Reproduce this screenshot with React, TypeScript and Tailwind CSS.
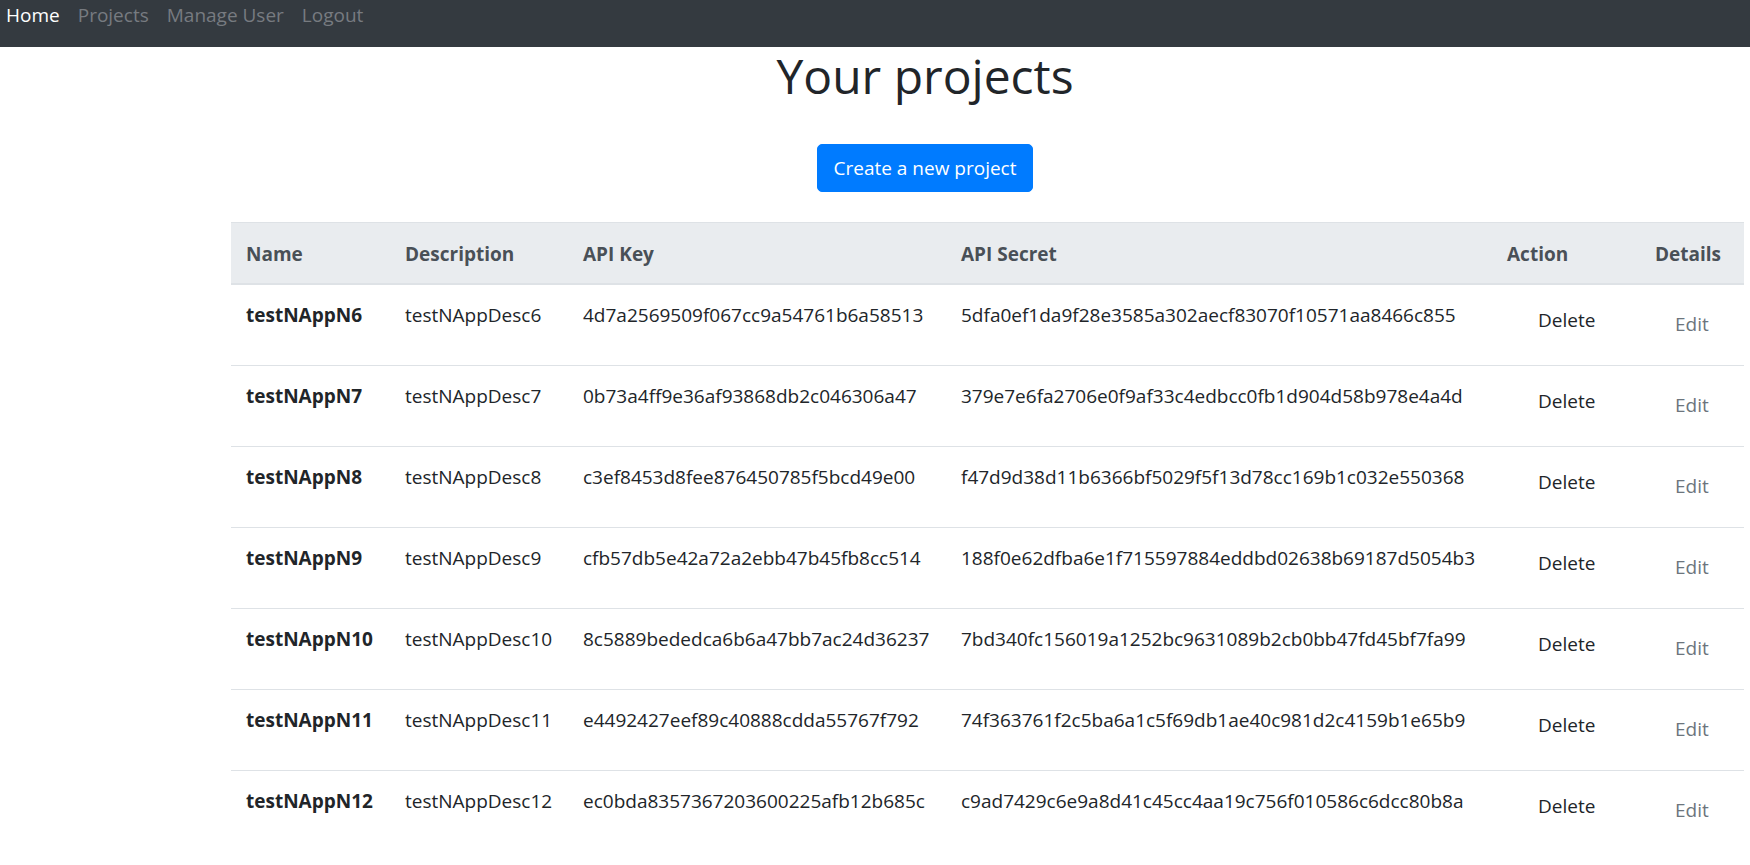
import React from "react";

type Project = {
  name: string;
  desc: string;
  apiKey: string;
  apiSecret: string;
};

const PROJECTS: Project[] = [
  {
    name: "testNAppN6",
    desc: "testNAppDesc6",
    apiKey: "4d7a2569509f067cc9a54761b6a58513",
    apiSecret: "5dfa0ef1da9f28e3585a302aecf83070f10571aa8466c855",
  },
  {
    name: "testNAppN7",
    desc: "testNAppDesc7",
    apiKey: "0b73a4ff9e36af93868db2c046306a47",
    apiSecret: "379e7e6fa2706e0f9af33c4edbcc0fb1d904d58b978e4a4d",
  },
  {
    name: "testNAppN8",
    desc: "testNAppDesc8",
    apiKey: "c3ef8453d8fee876450785f5bcd49e00",
    apiSecret: "f47d9d38d11b6366bf5029f5f13d78cc169b1c032e550368",
  },
  {
    name: "testNAppN9",
    desc: "testNAppDesc9",
    apiKey: "cfb57db5e42a72a2ebb47b45fb8cc514",
    apiSecret: "188f0e62dfba6e1f715597884eddbd02638b69187d5054b3",
  },
  {
    name: "testNAppN10",
    desc: "testNAppDesc10",
    apiKey: "8c5889bededca6b6a47bb7ac24d36237",
    apiSecret: "7bd340fc156019a1252bc9631089b2cb0bb47fd45bf7fa99",
  },
  {
    name: "testNAppN11",
    desc: "testNAppDesc11",
    apiKey: "e4492427eef89c40888cdda55767f792",
    apiSecret: "74f363761f2c5ba6a1c5f69db1ae40c981d2c4159b1e65b9",
  },
  {
    name: "testNAppN12",
    desc: "testNAppDesc12",
    apiKey: "ec0bda8357367203600225afb12b685c",
    apiSecret: "c9ad7429c6e9a8d41c45cc4aa19c756f010586c6dcc80b8a",
  },
];

const HEADERS = ["Name", "Description", "API Key", "API Secret", "Action", "Details"];

export default function App() {
  return (
    <main className="min-h-screen bg-white font-['Open_Sans',sans-serif] text-[19px] leading-[30px] text-[#212529]">
      <nav className="flex h-[47px] items-start gap-[18px] bg-[#343a40] pl-[6px]">
        <a className="text-white" href="#">
          Home
        </a>
        <a className="text-[#777b80]" href="#">
          Projects
        </a>
        <a className="text-[#777b80]" href="#">
          Manage User
        </a>
        <a className="text-[#777b80]" href="#">
          Logout
        </a>
      </nav>

      <section className="flex flex-col items-center pl-[100px]">
        <h1 className="text-[48px] font-medium leading-[58px] text-[#212529]">
          Your projects
        </h1>
        <button
          type="button"
          className="mt-[39px] flex h-[48px] items-center rounded-[5px] border border-[#007bff] bg-[#007bff] px-[16px] text-white"
        >
          Create a new project
        </button>
      </section>

      <section className="mt-[30px] pl-[231px]">
        <table className="w-[1513px] table-fixed border-collapse">
          <colgroup>
            <col className="w-[159px]" />
            <col className="w-[178px]" />
            <col className="w-[378px]" />
            <col className="w-[546px]" />
            <col className="w-[148px]" />
            <col className="w-[104px]" />
          </colgroup>
          <thead>
            <tr className="bg-[#e9ecef]">
              {HEADERS.map((h) => (
                <th
                  key={h}
                  className="border-t border-b-2 border-[#dee2e6] px-[15px] pt-[16px] pb-[14px] text-left align-bottom font-bold text-[#495057]"
                >
                  {h}
                </th>
              ))}
            </tr>
          </thead>
          <tbody>
            {PROJECTS.map((p) => (
              <tr key={p.name} className="h-[81px]">
                <td className="border-t border-[#dee2e6] px-[15px] pt-[15px] align-top font-bold whitespace-nowrap">
                  {p.name}
                </td>
                <td className="border-t border-[#dee2e6] px-[15px] pt-[15px] align-top whitespace-nowrap">
                  {p.desc}
                </td>
                <td className="border-t border-[#dee2e6] px-[15px] pt-[15px] align-top whitespace-nowrap">
                  {p.apiKey}
                </td>
                <td className="border-t border-[#dee2e6] px-[15px] pt-[15px] align-top whitespace-nowrap">
                  {p.apiSecret}
                </td>
                <td className="border-t border-[#dee2e6] px-[15px] pt-[15px] align-top">
                  <button type="button" className="pl-[31px] pt-[5px] text-[#212529]">
                    Delete
                  </button>
                </td>
                <td className="border-t border-[#dee2e6] px-[15px] pt-[15px] align-top">
                  <a href="#" className="inline-block pl-[20px] pt-[9px] text-[#6c757d]">
                    Edit
                  </a>
                </td>
              </tr>
            ))}
          </tbody>
        </table>
      </section>
    </main>
  );
}
